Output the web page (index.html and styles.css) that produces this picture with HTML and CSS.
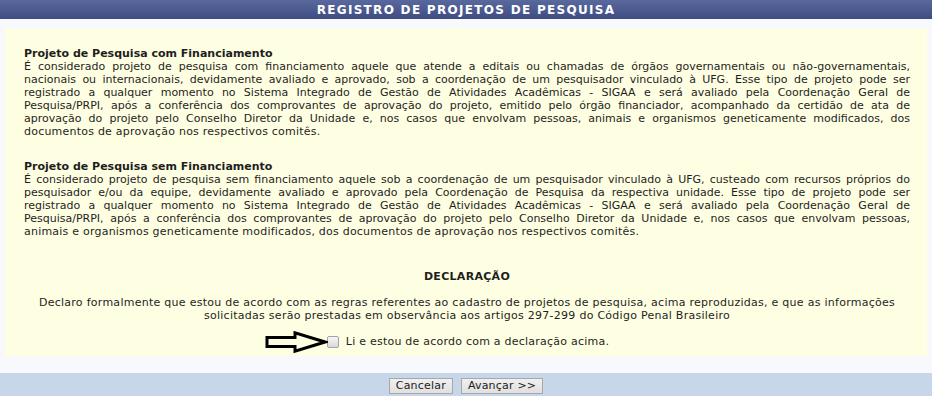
FILE: index.html
```html
<!DOCTYPE html>
<html lang="pt-BR">
<head>
<meta charset="utf-8">
<title>Registro de Projetos de Pesquisa</title>
<link rel="stylesheet" href="styles.css">
</head>
<body>
<div class="titulo">REGISTRO DE PROJETOS DE PESQUISA</div>
<div class="conteudo">
  <div class="aviso">
    <div class="bloco">
      <div class="cab">Projeto de Pesquisa com Financiamento</div>
      <span class="ln">É considerado projeto de pesquisa com financiamento aquele que atende a editais ou chamadas de órgãos governamentais ou não-governamentais,</span>
      <span class="ln">nacionais ou internacionais, devidamente avaliado e aprovado, sob a coordenação de um pesquisador vinculado à UFG. Esse tipo de projeto pode ser</span>
      <span class="ln">registrado a qualquer momento no Sistema Integrado de Gestão de Atividades Acadêmicas - SIGAA e será avaliado pela Coordenação Geral de</span>
      <span class="ln">Pesquisa/PRPI, após a conferência dos comprovantes de aprovação do projeto, emitido pelo órgão financiador, acompanhado da certidão de ata de</span>
      <span class="ln">aprovação do projeto pelo Conselho Diretor da Unidade e, nos casos que envolvam pessoas, animais e organismos geneticamente modificados, dos</span>
      <span class="fim">documentos de aprovação nos respectivos comitês.</span>
    </div>
    <div class="bloco">
      <div class="cab">Projeto de Pesquisa sem Financiamento</div>
      <span class="ln">É considerado projeto de pesquisa sem financiamento aquele sob a coordenação de um pesquisador vinculado à UFG, custeado com recursos próprios do</span>
      <span class="ln">pesquisador e/ou da equipe, devidamente avaliado e aprovado pela Coordenação de Pesquisa da respectiva unidade. Esse tipo de projeto pode ser</span>
      <span class="ln">registrado a qualquer momento no Sistema Integrado de Gestão de Atividades Acadêmicas - SIGAA e será avaliado pela Coordenação Geral de</span>
      <span class="ln">Pesquisa/PRPI, após a conferência dos comprovantes de aprovação do projeto pelo Conselho Diretor da Unidade e, nos casos que envolvam pessoas,</span>
      <span class="fim">animais e organismos geneticamente modificados, dos documentos de aprovação nos respectivos comitês.</span>
    </div>
    <div class="declaracao">
      <div class="dec-titulo">DECLARAÇÃO</div>
      <p class="dec-texto">Declaro formalmente que estou de acordo com as regras referentes ao cadastro de projetos de pesquisa, acima reproduzidas, e que as informações<br>solicitadas serão prestadas em observância aos artigos 297-299 do Código Penal Brasileiro</p>
      <div class="aceite">
        <label class="marca">
          <svg class="seta" width="64" height="22" viewBox="0 0 64 22" aria-hidden="true">
            <path d="M3 6.5 H31 V1.8 L61 11 L31 20.2 V15.5 H3 Z" fill="none" stroke="#000" stroke-width="3" stroke-linejoin="miter"/>
          </svg>
          <input type="checkbox" class="caixa">
          <span>Li e estou de acordo com a declaração acima.</span>
        </label>
      </div>
    </div>
  </div>
</div>
<div class="rodape">
  <button class="botao">Cancelar</button>
  <button class="botao">Avançar &gt;&gt;</button>
</div>
</body>
</html>
```

FILE: styles.css
```css
html, body {
  margin: 0;
  padding: 0;
}
body {
  font-family: "DejaVu Sans", Verdana, sans-serif;
  font-size: 11px;
  color: #1e1e1e;
  background: #c8d6ea;
}
.titulo {
  height: 19px;
  line-height: 21px;
  text-align: center;
  color: #fff;
  font-weight: bold;
  font-size: 12px;
  letter-spacing: 1.3px;
  background: linear-gradient(#5a699d, #3e4c82);
}
.conteudo {
  background: #f8f9fc;
  padding: 9px 5px 17px;
}
.aviso {
  background: #fefee2;
  padding: 19px 17px 8px 19px;
  line-height: 13px;
}
.bloco {
  margin-bottom: 22px;
}
.cab {
  font-weight: bold;
  font-size: 11px;
}
.ln {
  display: block;
  white-space: nowrap;
  text-align: justify;
  text-align-last: justify;
}
.fim {
  display: block;
  letter-spacing: 0.22px;
}
.declaracao {
  text-align: center;
  padding-top: 10px;
}
.dec-titulo {
  font-weight: bold;
  letter-spacing: 0.3px;
  margin-bottom: 13px;
}
.dec-texto {
  margin: 0 0 13px;
  letter-spacing: 0.27px;
}
.aceite {
  display: flex;
  justify-content: center;
  letter-spacing: 0.23px;
}
.marca {
  position: relative;
  display: flex;
  align-items: center;
  gap: 7px;
  padding-left: 2px;
}
.seta {
  position: absolute;
  right: 100%;
  top: 50%;
  margin-right: -3px;
  transform: translateY(-50%);
}
.caixa {
  appearance: none;
  -webkit-appearance: none;
  width: 12px;
  height: 12px;
  margin: 0;
  border: 1px solid #a4a4a4;
  border-radius: 2px;
  background: linear-gradient(#f6f6f6, #d9d9d9);
}
.rodape {
  display: flex;
  justify-content: center;
  gap: 8px;
  padding: 5px 0 4px;
}
.botao {
  font-family: "DejaVu Sans", Verdana, sans-serif;
  font-size: 11px;
  letter-spacing: 0.2px;
  color: #222;
  height: 16px;
  padding: 0 6px;
  border: 1px solid #a8a8a8;
  border-radius: 0;
  background: linear-gradient(#f0f0f0, #e0e0e0);
  line-height: 14px;
}
```
